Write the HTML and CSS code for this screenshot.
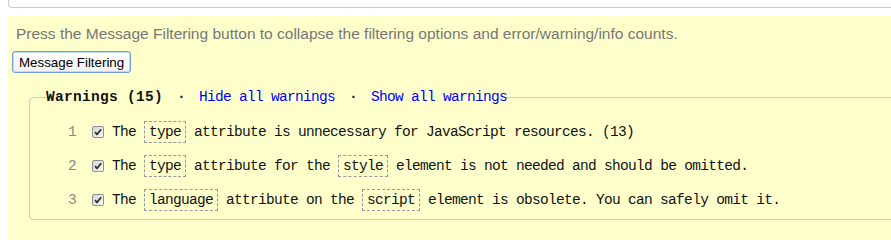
FILE: index.html
```html
<!DOCTYPE html>
<html>
<head>
<meta charset="utf-8">
<link rel="stylesheet" href="styles.css">
</head>
<body>
<div class="page">
  <div class="topbox"></div>
  <div class="panel">
    <p class="hint">Press the Message Filtering button to collapse the filtering options and error/warning/info counts.</p>
    <button class="filter-btn" type="button">Message Filtering</button>
    <fieldset class="group">
      <legend class="group-legend"><span class="title">Warnings (15)</span><span class="sep">·</span><a class="act" href="#">Hide all warnings</a><span class="sep">·</span><a class="act" href="#">Show all warnings</a></legend>
      <ol class="msgs">
        <li class="msg"><span class="num">1</span><span class="chk"><svg viewBox="0 0 12 12" width="12" height="12"><defs><linearGradient id="g1" x1="0" y1="0" x2="1" y2="1"><stop offset="0" stop-color="#d6d6d6"/><stop offset="1" stop-color="#fafafa"/></linearGradient></defs><rect x="0.5" y="0.5" width="11" height="11" rx="1.5" fill="url(#g1)" stroke="#8f8f8f"/><path d="M3 6.2 L5 8.4 L9.2 3.2" fill="none" stroke="#333" stroke-width="1.8"/></svg></span><span class="txt">The <code class="tok">type</code> attribute is unnecessary for JavaScript resources. (13)</span></li>
        <li class="msg"><span class="num">2</span><span class="chk"><svg viewBox="0 0 12 12" width="12" height="12"><rect x="0.5" y="0.5" width="11" height="11" rx="1.5" fill="url(#g1)" stroke="#8f8f8f"/><path d="M3 6.2 L5 8.4 L9.2 3.2" fill="none" stroke="#333" stroke-width="1.8"/></svg></span><span class="txt">The <code class="tok">type</code> attribute for the <code class="tok">style</code> element is not needed and should be omitted.</span></li>
        <li class="msg"><span class="num">3</span><span class="chk"><svg viewBox="0 0 12 12" width="12" height="12"><rect x="0.5" y="0.5" width="11" height="11" rx="1.5" fill="url(#g1)" stroke="#8f8f8f"/><path d="M3 6.2 L5 8.4 L9.2 3.2" fill="none" stroke="#333" stroke-width="1.8"/></svg></span><span class="txt">The <code class="tok">language</code> attribute on the <code class="tok">script</code> element is obsolete. You can safely omit it.</span></li>
      </ol>
    </fieldset>
  </div>
</div>
</body>
</html>
```
FILE: styles.css
```css
html { overflow: hidden; }
body { margin: 0; background: #fff; }
.page { width: 940px; }
.topbox {
  height: 7px;
  margin: 0 8px;
  border: 1px solid #cccccc;
  border-top: 0;
  border-radius: 0 0 4px 4px;
}
.panel {
  margin: 8px 0 0 8px;
  padding: 9px 0 40px 4px;
  background: #ffffcc;
}
.hint {
  margin: 0 0 0 4px;
  font: 15.5px/18px "Liberation Sans", Arial, sans-serif;
  color: #777777;
}
.filter-btn {
  display: block;
  margin-top: 8px;
  height: 22px;
  padding: 0 6px;
  font: 13.33px "Liberation Sans", Arial, sans-serif;
  color: #000;
  background: linear-gradient(#ffffff, #f2f2f2);
  border: 1px solid #6f9cd8;
  border-radius: 3px;
  box-shadow: inset 0 0 0 1px #bcdcf7;
}
.group {
  margin: 14px 0 0 17px;
  padding: 8px 0 2px 16px;
  border: 1px solid #cccccc;
  border-radius: 4px;
  min-width: 0;
}
.group-legend {
  padding: 0;
  font: 14.5px/20px "Liberation Mono", "Courier New", monospace;
  letter-spacing: -0.7px;
}
.title { font-weight: bold; color: #111; letter-spacing: 0.3px; }
.sep { display: inline-block; width: 36px; text-align: center; color: #222; font-weight: bold; }
.act { color: #0000ff; text-decoration: none; }
.msgs { list-style: none; margin: 0; padding: 0; }
.msg {
  display: flex;
  align-items: center;
  height: 34px;
  font: 14.5px/16px "Liberation Mono", "Courier New", monospace;
  letter-spacing: -0.7px;
  color: #111;
}
.num { width: 30px; text-align: right; color: #888; }
.chk { display: flex; margin-left: 16px; width: 12px; height: 12px; }
.txt { margin-left: 8px; white-space: pre; }
.tok {
  font: inherit;
  padding: 2px 4px 2px 4px;
  border: 1px dashed #999999;
}
```
